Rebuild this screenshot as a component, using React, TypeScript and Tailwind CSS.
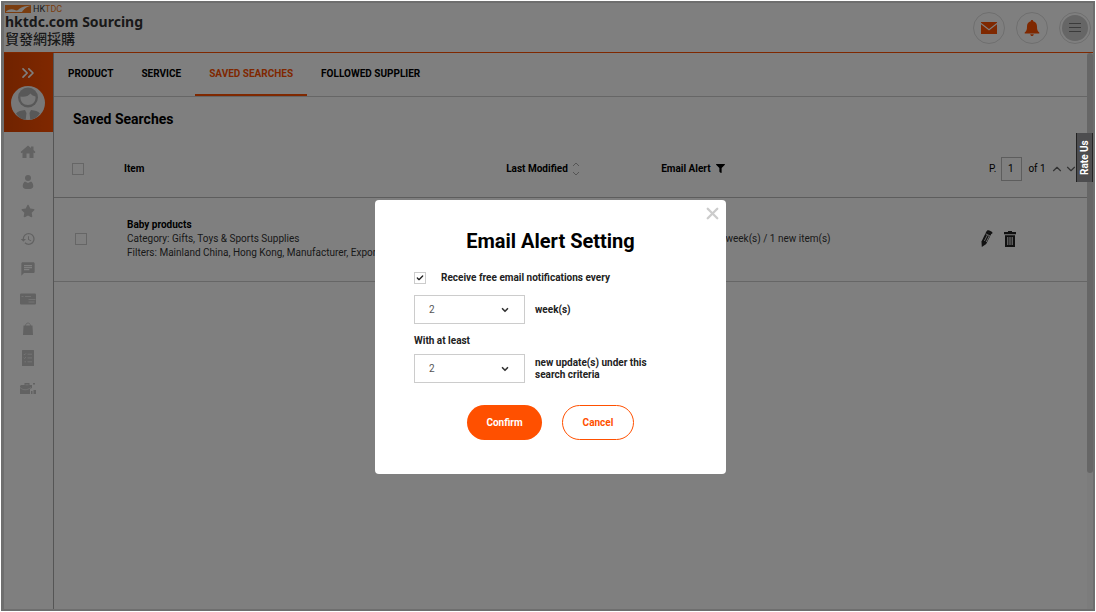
import React, { useState } from "react"
import { FaFilter, FaStar } from "react-icons/fa"
import { MdChat, MdHistory } from "react-icons/md"
import { Check, ChevronDown, ChevronUp, ChevronsRight, X } from "lucide-react"

const HomeIcon = () => (
    <svg className="size-4" viewBox="0 0 16 16" fill="currentColor">
        <path d="M8 1.500 11 4V2.500h2.500v3.600L15.500 8l-1 1.200-1-.8V14H9.500V9.500h-3V14H2.500V8.400l-1 .8L.5 8z" />
    </svg>
)

const UserIcon = () => (
    <svg className="size-4" viewBox="0 0 16 16" fill="currentColor">
        <circle cx="8" cy="4" r="3" />
        <path d="M5 7.4 8 9l3-1.600c1.500.8 2.300 2.600 2.300 4.800 0 2-2 2.800-5.300 2.800s-5.300-.8-5.300-2.800C2.700 10 3.500 8.200 5 7.400z" />
    </svg>
)

const CardIcon = () => (
    <svg className="size-4" viewBox="0 0 16 16" fill="currentColor">
        <rect y="2.500" width="16" height="11" rx="1" />
        <g stroke="#fff" strokeOpacity=".6">
            <path d="M1.500 5.500h2M5 5.500h6M8.500 8.500h7M8.500 11h6" />
        </g>
    </svg>
)

const BagIcon = () => (
    <svg className="size-4" viewBox="0 0 16 16">
        <path d="M3.500 4.500h9l.5 9.500H3z" fill="currentColor" />
        <path d="M5.500 5c0-4 5-4 5 0" fill="none" stroke="currentColor" strokeWidth=".8" />
    </svg>
)

const ListIcon = () => (
    <svg className="size-4" viewBox="0 0 16 16">
        <rect x="2" width="12" height="16" rx=".5" fill="currentColor" />
        <path d="m3.800 4 .8.800L6 3.300M7.500 4.200H12m-8.200 3.500.8.800L6 7M7.500 7.900H12M4.500 11.800H6m1.500 0H12" fill="none" stroke="#fff" strokeOpacity=".6" />
    </svg>
)

const BriefcaseIcon = () => (
    <svg className="size-4" viewBox="0 0 16 16">
        <path d="M1 5h3.500V3h5v2H12v3l-2 1v5H0V6z" fill="currentColor" />
        <path d="M0 7.500c3 3 7 3 11 0M5.500 4.800h3" fill="none" stroke="#fff" strokeOpacity=".6" />
        <path d="M11 11h1.500v3H11zM13.500 10H16v4h-2.500zM13 3h2v1.500h-2z" fill="currentColor" />
    </svg>
)

const MailIcon = () => (
    <svg className="h-3 w-4" viewBox="0 0 16 12" fill="currentColor">
        <path d="M0 0h16v.8L8 7 0 .8zM0 2.300l8 6.200 8-6.200V12H0z" />
    </svg>
)

const BellIcon = () => (
    <svg className="size-4" viewBox="0 0 16 16" fill="currentColor">
        <path d="M8 0c.8 0 1.200.5 1.200 1.200C12 1.800 13 4 13 6.500c0 3.500.6 4.700 2.300 6V13.500H.7v-1c1.700-1.300 2.300-2.500 2.300-6C3 4 4 1.800 6.800 1.200 6.800.5 7.200 0 8 0zM6.200 14.200h3.600C9.600 15.400 9 16 8 16s-1.600-.6-1.800-1.800z" />
    </svg>
)

const PencilIcon = () => (
    <svg className="h-[18px] w-3" viewBox="0 0 12 18">
        <path d="M5.500 1.200 10.500 3.500 5.200 14 .8 17 .500 11.500z" fill="#222" />
        <path d="m4.600 3.800 5 2.400M3.400 11l3-6M5.200 12l3-6" stroke="#fff" strokeWidth=".8" fill="none" />
        <path d="M6.200.5c1-.8 5.600 1.300 5.300 2.500l-.6 1L5.500 1.500z" fill="#222" />
    </svg>
)

const TrashIcon = () => (
    <svg className="h-4 w-3" viewBox="0 0 12 16">
        <path d="M4 0h4v1h4v2.200H0V1h4zM1 4.200h10V16H1z" fill="#222" />
        <path d="M3.800 6v8M6 6v8M8.200 6v8" stroke="#fff" strokeWidth="1" />
    </svg>
)

const Avatar = () => (
    <svg className="size-[34px]" viewBox="0 0 34 34">
        <circle cx="17" cy="17" r="17" fill="#f0f0f0" />
        <circle cx="17" cy="11.500" r="10" fill="#b0b0b0" />
        <path d="M9.500 10.500c4 1 8-.5 10-3 1 1.500 3 2.500 5 3 .5 5-3 8.500-7.500 8.500s-8-3.500-7.500-8.500z" fill="#f0f0f0" />
        <path d="M5 27.500c2-2.500 5-3 9-3.500l1.500 3-.8 6.700C10.500 33.800 7.300 31.500 5 27.500zM29 27.500c-2-2.500-5-3-9-3.500l-1.500 3 .8 6.700c4.200-.4 7.400-2.700 9.700-6.700z" fill="#b0b0b0" />
    </svg>
)

const Logo = () => (
    <a href="#home" className="flex flex-col self-start pt-px pl-px">
        <span className="flex h-[10px] items-center gap-[2px] text-[9px] leading-[10px]">
            <svg className="h-2 w-[26px]" viewBox="0 0 26 8">
                <rect width="26" height="8" fill="#f47b20" />
                <path d="M1 6.500C4 4 7 3.800 10 5c2 1 2.500.5 4-1C17 1.500 21 .8 26 .8 21 2 19 4 17 7H1z" fill="#fff" />
            </svg>
            <span className="text-[#333]">HK<span className="text-[#f47b20]">TDC</span></span>
        </span>
        <span className="font-['Noto_Sans',sans-serif] text-[14px] leading-4 font-bold text-[#333]">hktdc.com Sourcing</span>
        <span className="font-['Noto_Sans_CJK_TC',sans-serif] text-[14px] leading-4 font-medium text-[#333]">貿發網採購</span>
    </a>
)

const menu = [
    { label: "Home", icon: <HomeIcon /> },
    { label: "Profile", icon: <UserIcon /> },
    { label: "Favourites", icon: <FaStar className="size-[14px]" /> },
    { label: "History", icon: <MdHistory className="size-4" stroke="currentColor" /> },
    { label: "Messages", icon: <MdChat className="size-4" /> },
    { label: "Business cards", icon: <CardIcon /> },
    { label: "Orders", icon: <BagIcon /> },
    { label: "Forms", icon: <ListIcon /> },
    { label: "Business tools", icon: <BriefcaseIcon /> },
]

const tabs = ["PRODUCT", "SERVICE", "SAVED SEARCHES", "FOLLOWED SUPPLIER"]

const round = "flex size-8 items-center justify-center rounded-full border border-[#ddd] text-[#ff5000]"
const box = "block size-3 appearance-none border border-[#ccc]"

const Header: React.FC = () => (
    <header className="flex h-[50px] items-center justify-between border-b border-[#ff5000] pr-[2px]">
        <Logo />
        <div className="flex gap-[11px]">
            <button className={round} aria-label="Messages"><MailIcon /></button>
            <button className={round} aria-label="Notifications"><BellIcon /></button>
            <button className={round} aria-label="Menu">
                <span className="flex size-[26px] shrink-0 items-center justify-center rounded-full bg-[#ccc] text-[#777]">
                    <svg className="size-3" viewBox="0 0 12 12" stroke="currentColor"><path d="M0 1.500h12M0 5.500h12M0 9.500h12" /></svg>
                </span>
            </button>
        </div>
    </header>
)

const Sidebar: React.FC = () => (
    <aside className="w-[49px] shrink-0">
        <div className="flex h-[79px] flex-col items-center gap-[3px] bg-linear-to-r from-[#e04600] to-[#ff5000] pt-[10px] pr-px">
            <button aria-label="Expand" className="text-white"><ChevronsRight size={20} strokeWidth={2} /></button>
            <Avatar />
        </div>
        <ul className="mt-3 flex h-[252px] flex-col items-center justify-between pr-px text-[#c4c4c4]">
            {menu.map((m) => (
                <li key={m.label}><a href="#menu" aria-label={m.label}>{m.icon}</a></li>
            ))}
        </ul>
    </aside>
)

const SavedSearches: React.FC = () => (
    <main className="min-w-0 grow border-l border-[#aaa]">
        <nav className="flex h-[44px] border-b border-[#ccc] text-[10px] font-bold">
            {tabs.map((t) => (
                <a
                    key={t}
                    href="#tab"
                    className={t === "SAVED SEARCHES"
                        ? "flex items-center border-b-2 border-[#ff5000] px-[14px] text-[#ff5000]"
                        : "flex items-center border-b-2 border-transparent px-[14px] text-black"}
                >{t}</a>
            ))}
        </nav>
        <h1 className="pt-3 pl-[19px] text-[14px] leading-5 font-bold">Saved Searches</h1>
        <table className="mt-3 w-full table-fixed border-collapse text-left text-[10px] leading-[14px]">
            <colgroup>
                <col className="w-[70px]" />
                <col className="w-[37%]" />
                <col className="w-[15%]" />
                <col />
                <col className="w-[110px]" />
            </colgroup>
            <thead>
                <tr className="h-[56px] border-b border-[#bbb]">
                    <th className="pl-[18px]"><input type="checkbox" aria-label="Select all" className={box} /></th>
                    <th>Item</th>
                    <th>
                        <span className="flex items-center gap-1">
                            Last Modified
                            <svg className="h-[14px] w-2" viewBox="0 0 8 14" fill="none" stroke="#aaa"><path d="m1 4 3-3 3 3M1 10l3 3 3-3" /></svg>
                        </span>
                    </th>
                    <th>
                        <span className="flex items-center gap-[5px]">Email Alert <FaFilter size={9} /></span>
                    </th>
                    <th className="font-normal">
                        <span className="flex items-center pl-[12px]">
                            <label htmlFor="page">P.</label>
                            <input id="page" defaultValue="1" className="mr-[6px] ml-[5px] h-6 w-[21px] border border-[#bbb] pr-[2px] text-center" />
                            <span className="whitespace-nowrap">of 1</span>
                            <button aria-label="Previous page" className="ml-1 text-[#666]"><ChevronUp size={14} /></button>
                            <button aria-label="Next page" className="text-[#666]"><ChevronDown size={14} /></button>
                        </span>
                    </th>
                </tr>
            </thead>
            <tbody>
                <tr className="h-[84px] border-b border-[#ccc]">
                    <td className="pl-[21px]"><input type="checkbox" aria-label="Select Baby products" className={box} /></td>
                    <td className="pl-[3px] whitespace-nowrap text-[#333]">
                        <p className="font-bold text-black">Baby products</p>
                        <p>Category: Gifts, Toys &amp; Sports Supplies</p>
                        <p>Filters: Mainland China, Hong Kong, Manufacturer, Exporter</p>
                    </td>
                    <td></td>
                    <td className="pl-px whitespace-nowrap text-[#333]">Notify every 2 week(s) / 1 new item(s)</td>
                    <td>
                        <span className="flex items-center gap-[11px] pl-[4px]">
                            <button aria-label="Edit"><PencilIcon /></button>
                            <button aria-label="Delete"><TrashIcon /></button>
                        </span>
                    </td>
                </tr>
            </tbody>
        </table>
    </main>
)

const AmountSelect: React.FC<{ id: string }> = ({ id }) => {
    const [value, setValue] = useState("2")

    return (
        <span className="relative flex">
            <select
                id={id}
                value={value}
                onChange={(e) => setValue(e.target.value)}
                className="h-[29px] w-[111px] appearance-none border border-[#ccc] bg-white pl-[14px] text-[10px] font-normal text-[#555]"
            >
                {["1", "2", "3", "4"].map((n) => <option key={n}>{n}</option>)}
            </select>
            <ChevronDown size={10} strokeWidth={4} className="pointer-events-none absolute top-[10px] right-[15px] text-[#333]" />
        </span>
    )
}

const EmailAlertDialog: React.FC = () => {
    const [receive, setReceive] = useState(true)

    return (
        <div className="fixed inset-px flex items-start justify-center bg-black/50 pt-[199px] pl-[5px]">
            <div role="dialog" aria-labelledby="title" className="relative w-[351px] rounded bg-white px-[39px] pt-[27px] pb-[34px] text-[10px] leading-[12px] font-bold text-[#222]">
                <button aria-label="Close" className="absolute top-[4px] right-[4px] text-[#ccc]"><X size={19} strokeWidth={3} /></button>
                <h2 id="title" className="text-center text-[20px] leading-7 text-black">Email Alert Setting</h2>
                <div className="mt-4 flex h-[14px] items-center">
                    <span className="relative flex">
                        <input
                            id="receive"
                            type="checkbox"
                            checked={receive}
                            onChange={() => setReceive(!receive)}
                            className={box}
                        />
                        {receive && <Check size={8} strokeWidth={4} className="pointer-events-none absolute top-[2px] left-[2px]" />}
                    </span>
                    <label htmlFor="receive" className="ml-[15px]">Receive free email notifications every</label>
                </div>
                <div className="mt-[10px] flex items-center gap-[10px]">
                    <AmountSelect id="weeks" />
                    <label htmlFor="weeks">week(s)</label>
                </div>
                <p className="mt-[10px] leading-[14px]">With at least</p>
                <div className="mt-[6px] flex items-center gap-[10px]">
                    <AmountSelect id="updates" />
                    <label htmlFor="updates">new update(s) under this<br />search criteria</label>
                </div>
                <div className="mt-[22px] flex justify-center gap-5">
                    <button className="h-[35px] w-[75px] rounded-full bg-[#ff5000] text-white">Confirm</button>
                    <button className="h-[35px] w-[72px] rounded-full border border-[#ff5000] text-[#ff5000]">Cancel</button>
                </div>
            </div>
        </div>
    )
}

export default function App() {
    return (
        <div className="flex min-h-screen flex-col bg-white p-px font-[Roboto,sans-serif] text-black">
            <div className="flex grow flex-col border-2 border-l-3 border-[#ddd]">
                <Header />
                <div className="flex grow">
                    <Sidebar />
                    <SavedSearches />
                    <div className="w-[6px] shrink-0 bg-[#f8f8f8]">
                        <div className="h-[420px] rounded bg-[#ccc]"></div>
                    </div>
                </div>
            </div>
            <EmailAlertDialog />
            <button className="fixed top-[133px] right-[3px] h-[49px] w-[17px] rotate-180 border-y border-[#222] bg-[#4d4d4f] text-[10px] font-bold text-white [writing-mode:vertical-rl]">Rate Us</button>
        </div>
    )
}
